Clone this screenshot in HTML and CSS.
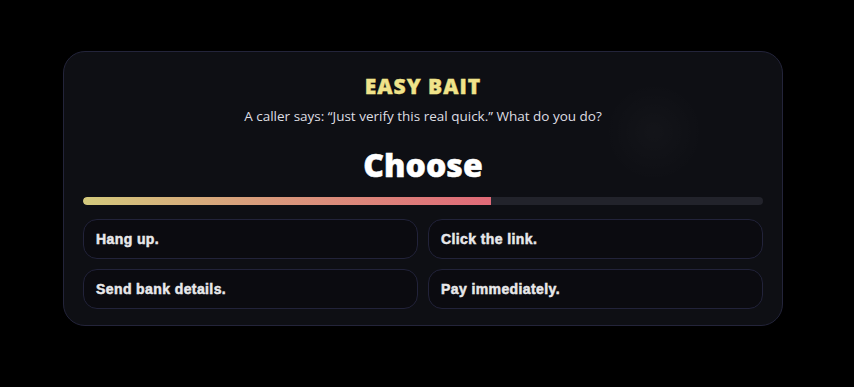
FILE: index.html
```html
<!DOCTYPE html>
<html lang="en">
<head>
  <meta charset="UTF-8">
  <meta name="viewport" content="width=device-width, initial-scale=1.0">
  <title>Easy Bait</title>
  <link rel="stylesheet" href="styles.css">
</head>
<body>
  <main class="stage">
    <section class="card">
      <div class="glow"></div>
      <h1 class="level">EASY BAIT</h1>
      <p class="prompt">A caller says: “Just verify this real quick.” What do you do?</p>
      <h2 class="choose">Choose</h2>
      <div class="timer">
        <div class="timer-fill" style="width: 60%"></div>
      </div>
      <div class="options">
        <button class="option">Hang up.</button>
        <button class="option">Click the link.</button>
        <button class="option">Send bank details.</button>
        <button class="option">Pay immediately.</button>
      </div>
    </section>
  </main>
</body>
</html>
```

FILE: styles.css
```css
body {
  margin: 0;
  padding: 0;
  background-color: #000;
  color: #fff;
  font-family: "Open Sans", "Noto Sans", sans-serif;
}

.stage {
  height: 387px;
  box-sizing: border-box;
  padding: 51px 71px 0 63px;
}

.card {
  position: relative;
  box-sizing: border-box;
  width: 720px;
  padding: 21px 19px 16px;
  background-color: #0e0f14;
  border: 1px solid #23243a;
  border-radius: 22px;
  text-align: center;
  overflow: hidden;
}

.glow {
  position: absolute;
  left: 545px;
  top: 25px;
  width: 90px;
  height: 110px;
  border-radius: 50%;
  background: radial-gradient(circle, rgba(255, 255, 255, 0.025), rgba(255, 255, 255, 0) 70%);
  pointer-events: none;
}

.level {
  margin: 0;
  font-size: 21px;
  line-height: 26px;
  font-weight: 800;
  letter-spacing: 1px;
  color: #f0e38a;
  -webkit-text-stroke: 0.4px #f0e38a;
}

.prompt {
  margin: 8px 0 0;
  font-size: 13.5px;
  line-height: 18px;
  color: #dedee3;
}

.choose {
  margin: 20px 0 0;
  font-size: 32px;
  line-height: 40px;
  font-weight: 800;
  color: #fff;
  -webkit-text-stroke: 0.5px #fff;
}

.timer {
  margin-top: 12px;
  height: 8px;
  border-radius: 4px;
  background-color: #22232b;
  overflow: hidden;
}

.timer-fill {
  height: 100%;
  border-radius: 4px 0 0 4px;
  background: linear-gradient(90deg, #d3c97c, #d99a7c 45%, #e06a78);
}

.options {
  display: grid;
  grid-template-columns: 1fr 1fr;
  gap: 10px 10px;
  margin-top: 14px;
}

.option {
  height: 40px;
  padding: 0 12px;
  text-align: left;
  font-family: "Liberation Sans", Arial, sans-serif;
  font-size: 14px;
  font-weight: 700;
  letter-spacing: 0.4px;
  color: #e8e8ea;
  -webkit-text-stroke: 0.5px #e8e8ea;
  background-color: #0b0b10;
  border: 1px solid #22233a;
  border-radius: 14px;
  cursor: pointer;
}

.option:hover {
  border-color: #3a3b5a;
}
```
